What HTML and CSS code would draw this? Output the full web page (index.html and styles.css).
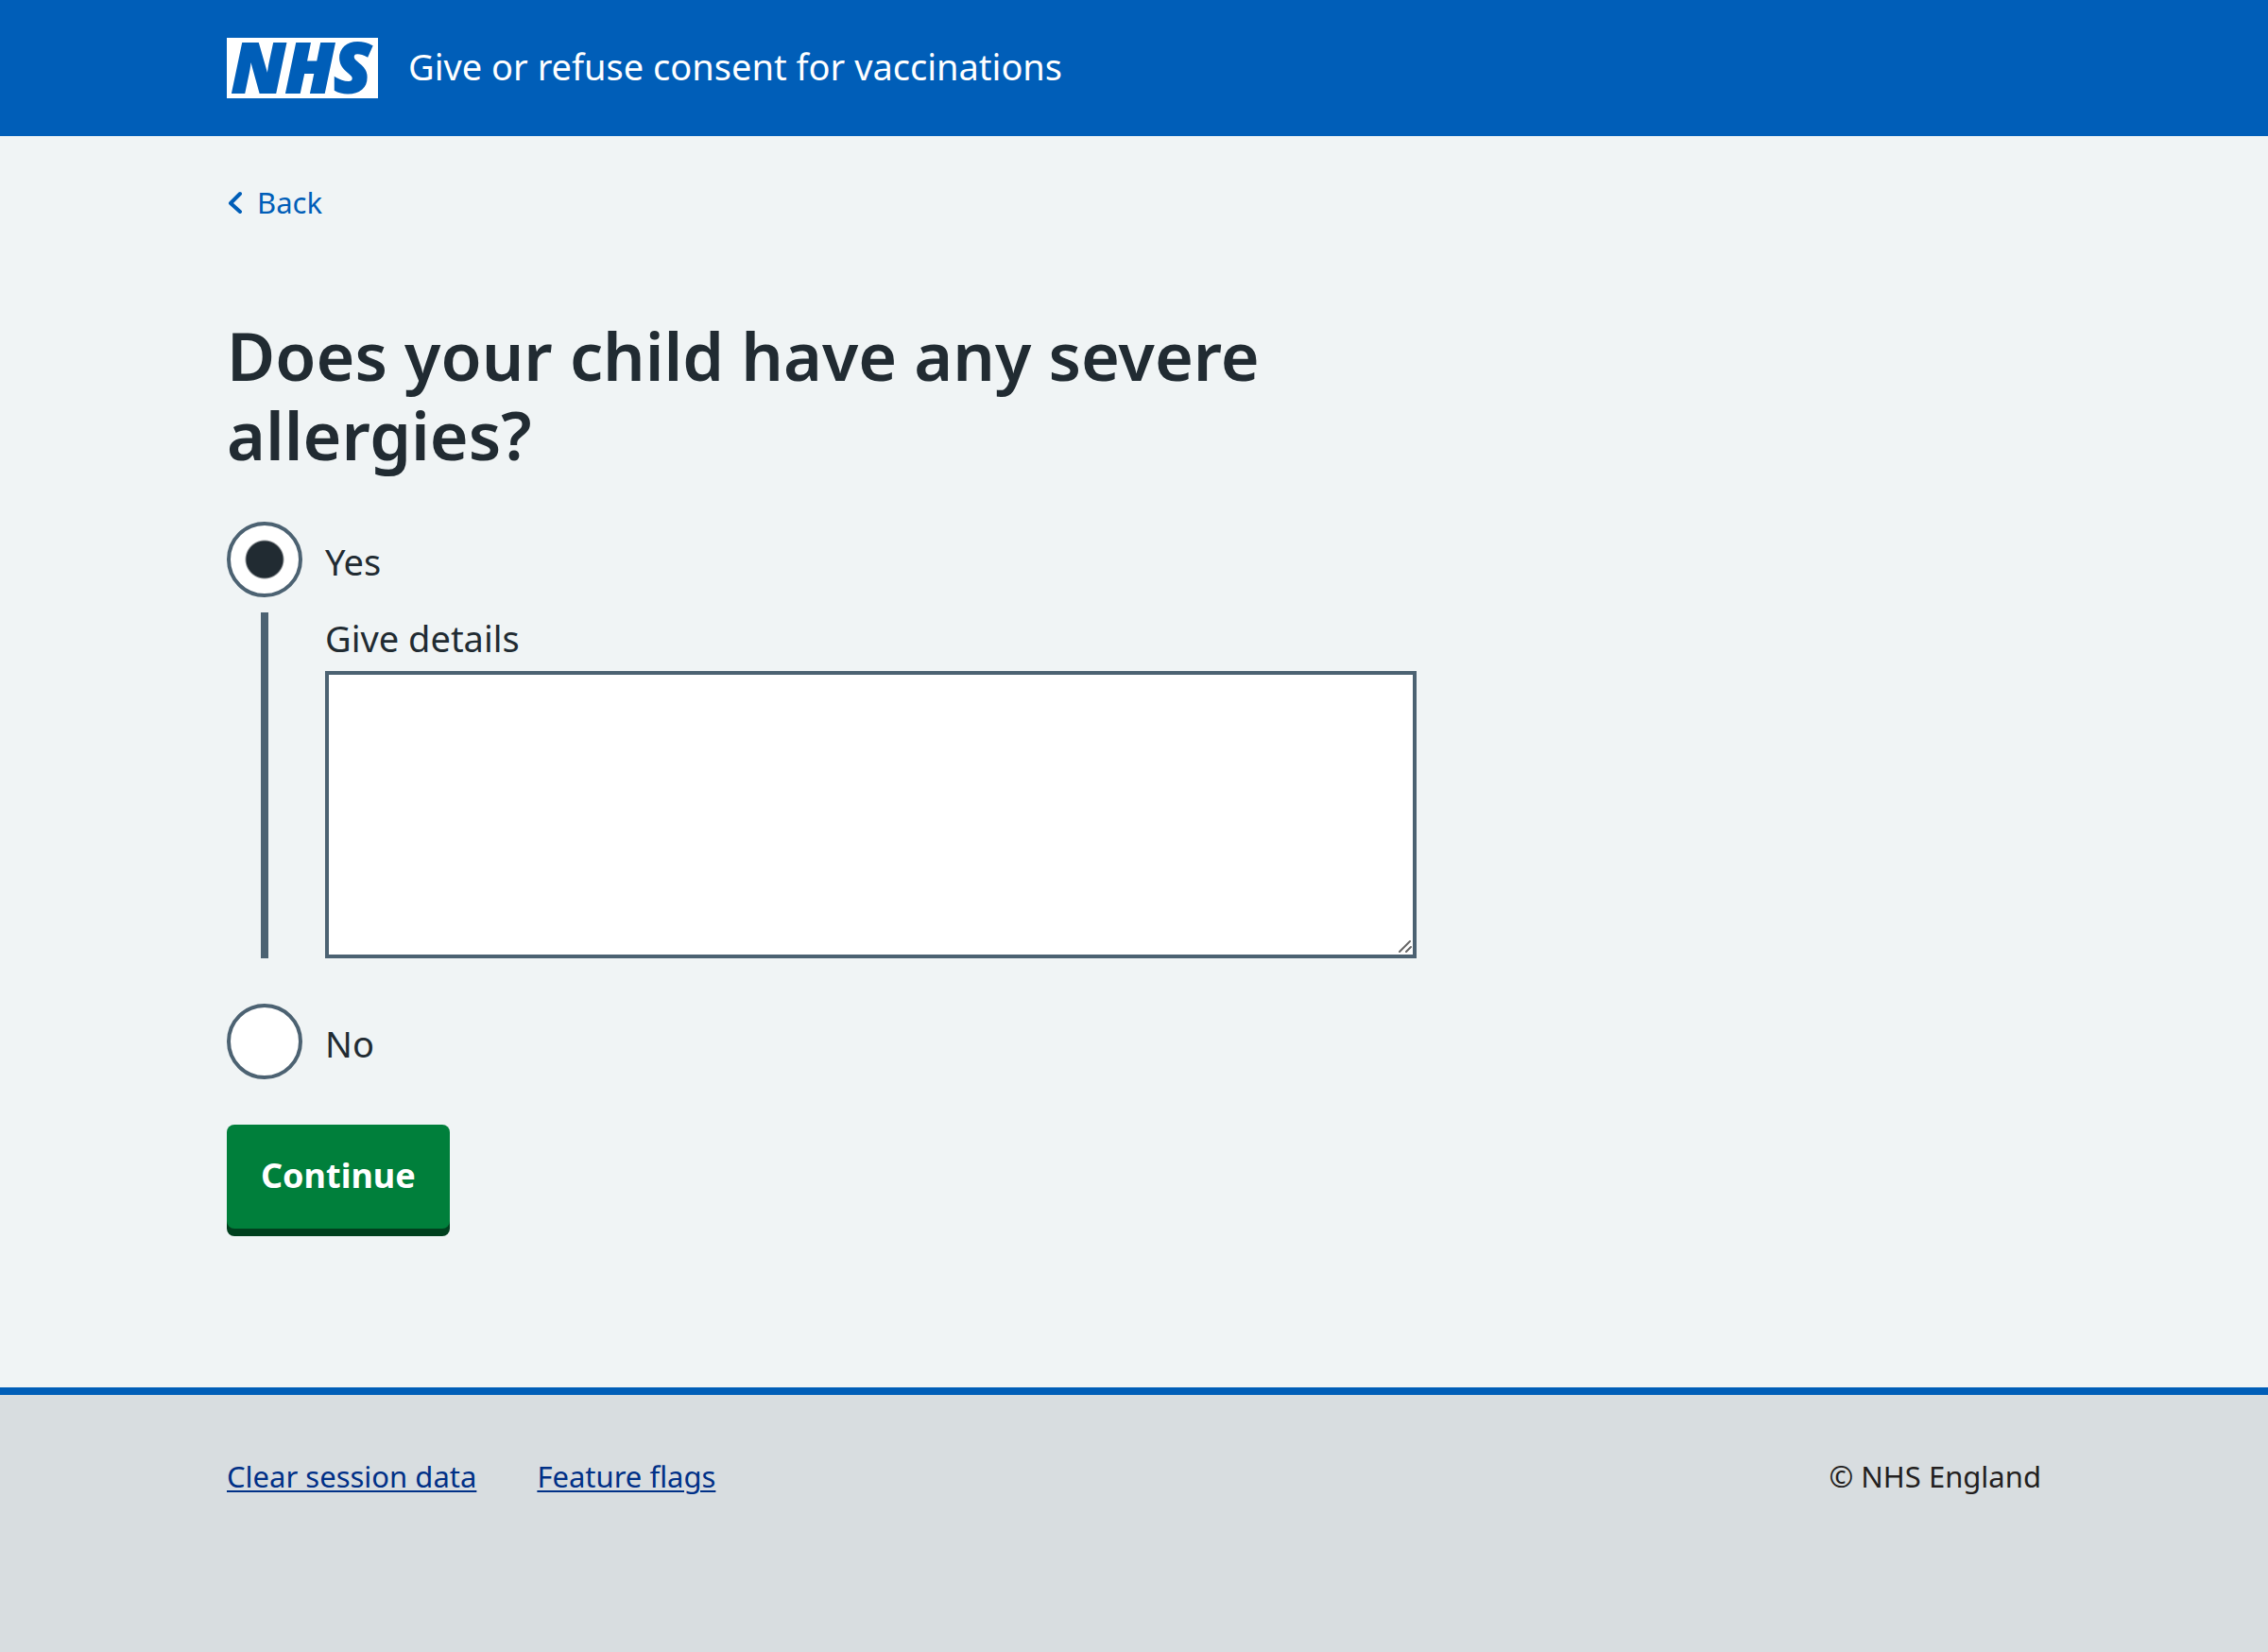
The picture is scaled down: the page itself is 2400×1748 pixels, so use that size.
FILE: index.html
```html
<!DOCTYPE html>
<html lang="en">
<head>
  <meta charset="utf-8">
  <meta name="viewport" content="width=device-width, initial-scale=1">
  <title>Does your child have any severe allergies?</title>
  <link rel="stylesheet" href="styles.css">
</head>
<body>
  <header class="header">
    <div class="container header-inner">
      <svg class="logo" viewBox="0 0 160 64" role="img" aria-label="NHS">
        <rect width="160" height="64" fill="#fff"/>
        <text class="logo-text" x="5" y="58">NHS</text>
      </svg>
      <span class="service-name">Give or refuse consent for vaccinations</span>
    </div>
  </header>

  <div class="page">
    <div class="container">
      <a class="back-link" href="#">
        <svg class="back-icon" viewBox="0 0 16 24" aria-hidden="true">
          <path d="M14 3 4 13l10 9" fill="none" stroke="currentColor" stroke-width="4" stroke-linecap="round" stroke-linejoin="round"/>
        </svg>
        Back
      </a>
      <main class="column">
        <form class="form">
          <fieldset class="fieldset">
            <legend><h1 class="heading">Does your child have any severe allergies?</h1></legend>
            <div class="radio-item">
              <input class="radio" type="radio" name="allergies" id="yes" value="yes" checked>
              <label class="radio-label" for="yes">Yes</label>
            </div>
            <div class="conditional">
              <label class="label" for="details">Give details</label>
              <textarea class="textarea" id="details" name="details" rows="5"></textarea>
            </div>
            <div class="radio-item">
              <input class="radio" type="radio" name="allergies" id="no" value="no">
              <label class="radio-label" for="no">No</label>
            </div>
          </fieldset>
          <button class="button" type="submit">Continue</button>
        </form>
      </main>
    </div>
  </div>

  <footer class="footer">
    <div class="container footer-inner">
      <nav class="footer-links">
        <a class="footer-link" href="#">Clear session data</a>
        <a class="footer-link" href="#">Feature flags</a>
      </nav>
      <span class="copyright">© NHS England</span>
    </div>
  </footer>
</body>
</html>
```

FILE: styles.css
```css
* {
  box-sizing: border-box;
}

html {
  background: #d8dde0;
}

body {
  margin: 0;
  background: #f0f4f5;
  color: #212b32;
  font-family: "Noto Sans", "Open Sans", sans-serif;
  font-size: 38px;
  line-height: 54px;
}

.container {
  max-width: 1984px;
  margin: 0 auto;
  padding: 0 32px;
}

.header {
  padding: 40px 0;
  background: #005eb8;
  color: #fff;
}

.header-inner {
  display: flex;
  align-items: flex-start;
  gap: 32px;
}

.logo {
  width: 160px;
  height: 64px;
  flex: none;
  overflow: visible;
}

.logo-text {
  fill: #005eb8;
  stroke: #005eb8;
  stroke-width: 2px;
  font-family: "Noto Sans", "Open Sans", sans-serif;
  font-size: 72px;
  font-style: italic;
  font-weight: 900;
}

.service-name {
  line-height: 60px;
}

.page {
  padding: 40px 0 160px;
}

.back-link {
  display: inline-flex;
  align-items: center;
  gap: 16px;
  color: #005eb8;
  font-size: 31px;
  line-height: 48px;
  text-decoration: none;
}

.back-icon {
  width: 16px;
  height: 24px;
}

.column {
  max-width: 1259px;
  padding-top: 96px;
}

.fieldset {
  margin: 0 0 48px;
  padding: 0;
  border: 0;
  min-width: 0;
}

.fieldset legend {
  padding: 0;
}

.heading {
  margin: 0 0 50px;
  font-size: 70px;
  font-weight: 600;
  line-height: 84px;
}

.radio-item {
  display: flex;
  align-items: center;
  gap: 24px;
}

.radio {
  appearance: none;
  flex: none;
  width: 80px;
  height: 80px;
  margin: 0;
  border: 4px solid #4c6272;
  border-radius: 50%;
  background: radial-gradient(circle, #212b32 19px, #fff 21px);
}

.radio:not(:checked) {
  background: #fff;
}

.radio-label {
  padding-top: 4px;
}

.conditional {
  display: flex;
  flex-direction: column;
  gap: 8px;
  margin: 16px 0 48px 36px;
  padding-left: 60px;
  border-left: 8px solid #4c6272;
}

.textarea {
  display: block;
  width: 100%;
  height: 304px;
  padding: 8px;
  border: 4px solid #4c6272;
  border-radius: 0;
  background: #fff;
  color: inherit;
  font: inherit;
  resize: vertical;
}

.textarea::-webkit-resizer {
  background: url("data:image/svg+xml,%3Csvg xmlns='http://www.w3.org/2000/svg' width='15' height='15'%3E%3Cpath d='M1 12 12 1M8 12l5-5' fill='none' stroke='%23666' stroke-width='2' stroke-linecap='round'/%3E%3C/svg%3E") no-repeat;
}

.button {
  display: block;
  height: 110px;
  margin: 0 0 8px;
  padding: 0 36px 2px;
  border: 0;
  border-radius: 8px;
  background: #007f3b;
  box-shadow: 0 8px 0 #00401e;
  color: #fff;
  font: inherit;
  font-size: 36px;
  font-weight: 700;
}

.footer {
  padding: 62px 0 128px;
  border-top: 8px solid #005eb8;
  background: #d8dde0;
  font-size: 31px;
  line-height: 48px;
}

.footer-inner {
  display: flex;
  justify-content: space-between;
}

.footer-links {
  display: flex;
  gap: 64px;
}

.footer-link {
  color: #003087;
  text-decoration-thickness: 2px;
  text-underline-offset: 3px;
}

.copyright {
  color: #231f20;
}
```
